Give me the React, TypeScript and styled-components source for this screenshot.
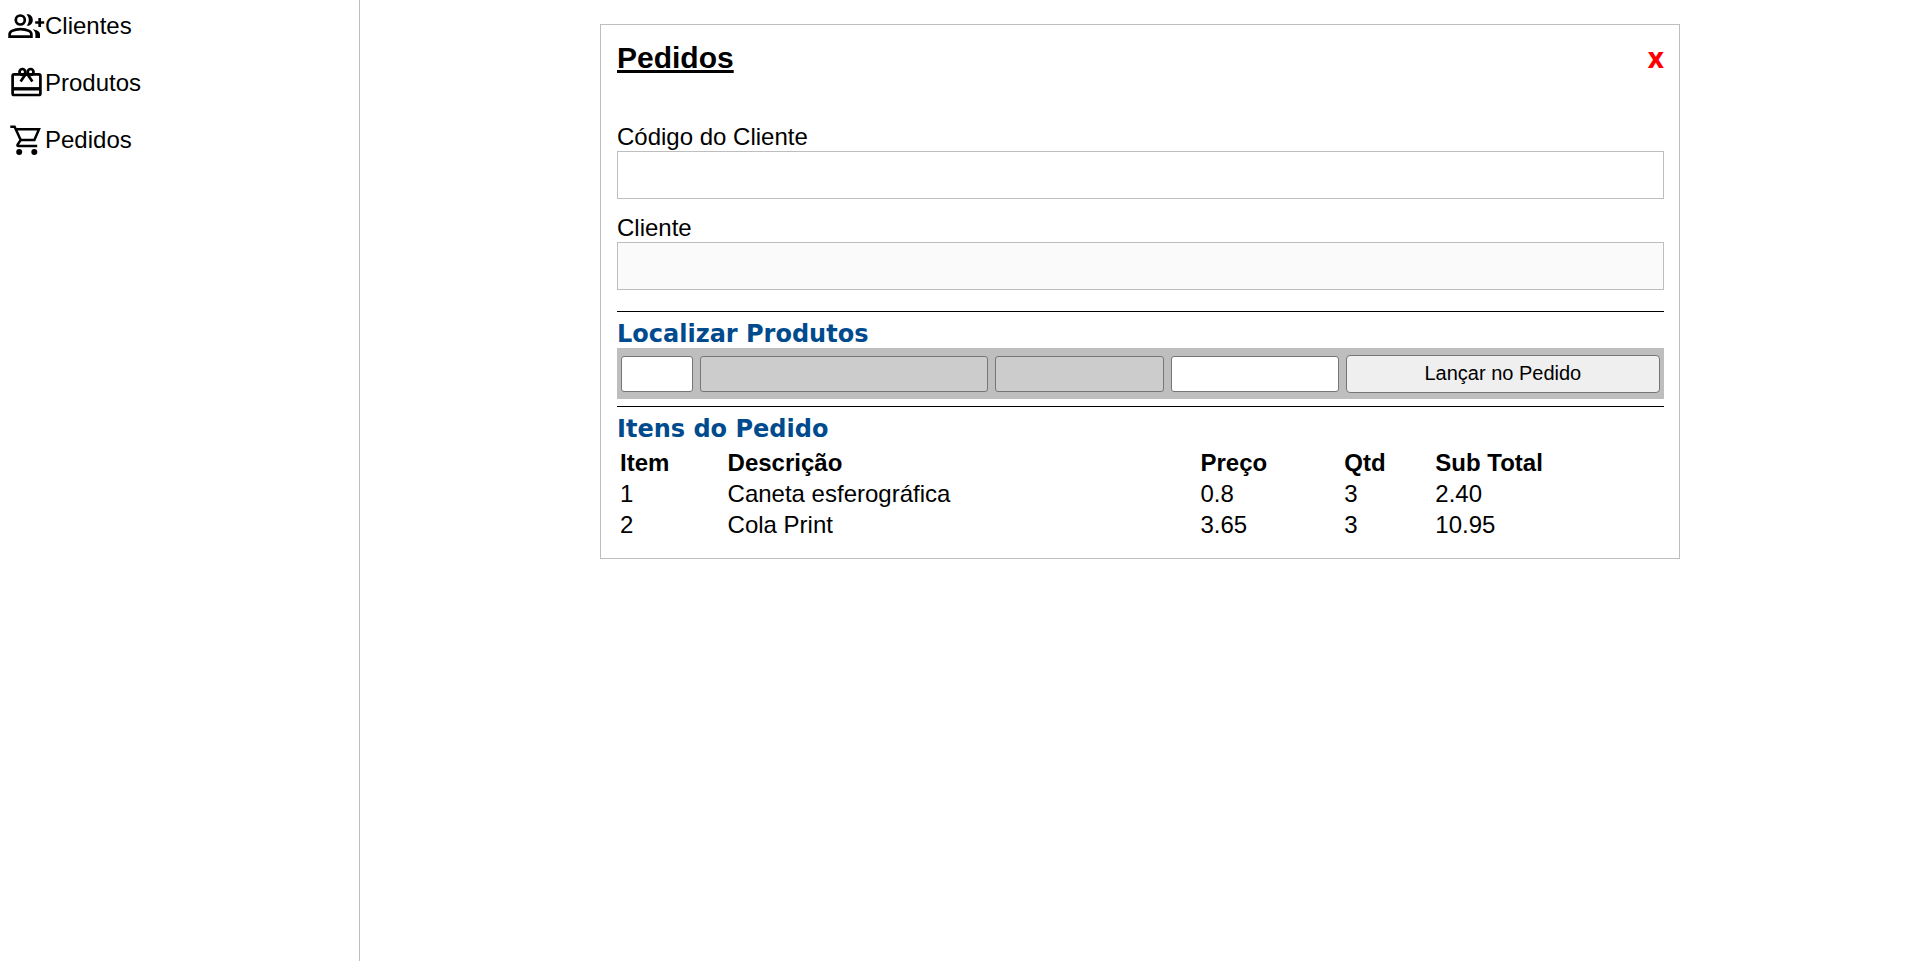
import React from "react";
import styled, { createGlobalStyle } from "styled-components";

const GlobalStyle = createGlobalStyle`
  * { box-sizing: border-box; margin: 0; padding: 0; }
  body {
    font-family: Arial, "Liberation Sans", sans-serif;
    font-size: 24px;
    line-height: 27px;
    color: #000;
    background: #fff;
  }
`;

const Page = styled.div`
  display: flex;
  align-items: stretch;
  min-height: 100vh;
`;

const Sidebar = styled.nav`
  flex: 0 0 360px;
  border-right: 1px solid #bebebe;
  padding: 8px;
`;

const MenuLink = styled.a`
  display: flex;
  align-items: center;
  height: 36px;
  margin-bottom: 21px;
  color: inherit;
  text-decoration: none;
`;

const MenuLabel = styled.span`
  padding-bottom: 2px;
`;

const MenuIcon = styled.svg`
  flex: none;
  width: 37px;
  height: 36px;
  fill: none;
  stroke: currentColor;
  stroke-width: 2.7;
`;

const Main = styled.main`
  flex: 1;
  min-width: 0;
  padding: 24px;
`;

const Card = styled.section`
  max-width: 1080px;
  margin: 0 auto;
  padding: 16px 15px 16px 16px;
  border: 1px solid #bebebe;
`;

const CardHeader = styled.header`
  display: flex;
  justify-content: space-between;
  align-items: flex-start;
  margin-bottom: 49px;
`;

const Title = styled.h1`
  font-size: 30px;
  line-height: 34px;
  text-decoration: underline;
`;

const CloseButton = styled.button`
  border: 0;
  background: none;
  color: #f00;
  font: bold 28px/32px "Open Sans", sans-serif;
  cursor: pointer;
`;

const Fields = styled.div`
  display: flex;
  flex-direction: column;
  gap: 16px;
  margin-bottom: 21px;
`;

const Field = styled.div`
  display: flex;
  flex-direction: column;
`;

const FieldLabel = styled.label`
  line-height: 25px;
  padding-bottom: 2px;
`;

const FieldInput = styled.input`
  height: 48px;
  padding: 0 8px;
  border: 1px solid #bebebe;
  font: inherit;

  &:disabled {
    background: #fafafa;
  }
`;

const Block = styled.section`
  border-top: 1px solid #000;
  padding-top: 8px;
`;

const BlockTitle = styled.h2`
  font: bold 24px/28px "DejaVu Sans", Verdana, sans-serif;
  color: #004b8d;
`;

const ProductBar = styled.form`
  display: grid;
  grid-template-columns: 72fr 288fr 168fr 168fr 314fr;
  align-items: center;
  gap: 7px;
  padding: 7px 4px 6px;
  margin-bottom: 7px;
  background: #bebebe;
`;

const ProductInput = styled.input`
  width: 100%;
  height: 36px;
  padding: 0 4px;
  border: 1px solid #767676;
  border-radius: 3px;
  background: #fff;
  font: inherit;

  &:disabled {
    background: #ccc;
  }
`;

const AddButton = styled.button`
  height: 38px;
  padding-bottom: 2px;
  border: 1px solid #767676;
  border-radius: 4px;
  background: #efefef;
  color: #000;
  font: 20px/24px Arial, "Liberation Sans", sans-serif;
  cursor: pointer;
`;

const ItemsTable = styled.table`
  width: 100%;
  margin-top: 4px;
  table-layout: fixed;
  border-collapse: separate;
  border-spacing: 2px;
  text-align: left;

  th,
  td {
    padding: 0 1px 2px;
  }
`;

const Column = styled.col<{ $width: string }>`
  width: ${(p) => p.$width};
`;

const ClientsIcon = () => (
  <MenuIcon viewBox="0 0 37 36" aria-hidden>
    <circle cx="12.3" cy="12" r="4.5" />
    <path d="M1.6 28.6V26.5C1.6 24.7 2.5 23.6 4 22.9C6.5 21.7 9.5 21.1 12.5 21.1S18.5 21.7 21 22.9C22.5 23.6 23.4 24.7 23.4 26.5V28.6Z" />
    <path
      d="M18.5 17.6C20.1 16.2 20.8 14.2 20.8 12S20.1 7.8 18.5 6.4C22 5.6 24.8 8.3 24.8 12S22 18.4 18.5 17.6ZM27.4 30V26.3C27.4 24.2 26.4 22.5 24.6 21.2C28.6 21.8 32 23.3 32 26.3V30Z"
      fill="currentColor"
      stroke="none"
    />
    <path d="M31.7 10V19M27.2 14.5H36.2" />
  </MenuIcon>
);

const ProductsIcon = () => (
  <MenuIcon viewBox="0 0 37 36" aria-hidden>
    <rect x="4.6" y="9.4" width="27.8" height="20.6" rx="1.6" />
    <path d="M4.6 23.8H32.4" strokeWidth="3.4" />
    <circle cx="14.4" cy="6.9" r="2.9" />
    <circle cx="22.6" cy="6.9" r="2.9" />
    <path d="M18.5 8L12.6 16.6M18.5 8L24.4 16.6" />
  </MenuIcon>
);

const OrdersIcon = () => (
  <MenuIcon viewBox="0 0 37 36" aria-hidden>
    <path
      d="M2.3 4.7H6.6L12.7 18H26.4L31 7.2H8M12.7 18L9.6 22.6C9.2 23.4 9.5 24 10.4 24H29.2"
      strokeWidth="2.5"
    />
    <circle cx="11.2" cy="30" r="3" fill="currentColor" stroke="none" />
    <circle cx="26.3" cy="30" r="3" fill="currentColor" stroke="none" />
  </MenuIcon>
);

const menu = [
  { label: "Clientes", Icon: ClientsIcon },
  { label: "Produtos", Icon: ProductsIcon },
  { label: "Pedidos", Icon: OrdersIcon },
];

const items = [
  { id: 1, description: "Caneta esferográfica", price: 0.8, quantity: 3 },
  { id: 2, description: "Cola Print", price: 3.65, quantity: 3 },
];

export default function App() {
  return (
    <>
      <GlobalStyle />
      <Page>
        <Sidebar>
          {menu.map(({ label, Icon }) => (
            <MenuLink key={label} href="#">
              <Icon />
              <MenuLabel>{label}</MenuLabel>
            </MenuLink>
          ))}
        </Sidebar>
        <Main>
          <Card>
            <CardHeader>
              <Title>Pedidos</Title>
              <CloseButton type="button">x</CloseButton>
            </CardHeader>
            <Fields>
              <Field>
                <FieldLabel htmlFor="codigo">Código do Cliente</FieldLabel>
                <FieldInput id="codigo" type="text" />
              </Field>
              <Field>
                <FieldLabel htmlFor="cliente">Cliente</FieldLabel>
                <FieldInput id="cliente" type="text" disabled />
              </Field>
            </Fields>
            <Block>
              <BlockTitle>Localizar Produtos</BlockTitle>
              <ProductBar onSubmit={(e) => e.preventDefault()}>
                <ProductInput aria-label="Código do produto" />
                <ProductInput aria-label="Descrição" disabled />
                <ProductInput aria-label="Preço" disabled />
                <ProductInput aria-label="Quantidade" />
                <AddButton type="submit">Lançar no Pedido</AddButton>
              </ProductBar>
            </Block>
            <Block>
              <BlockTitle>Itens do Pedido</BlockTitle>
              <ItemsTable>
                <colgroup>
                  <Column $width="10.2%" />
                  <Column $width="45.5%" />
                  <Column $width="13.7%" />
                  <Column $width="8.6%" />
                  <Column $width="22%" />
                </colgroup>
                <thead>
                  <tr>
                    <th>Item</th>
                    <th>Descrição</th>
                    <th>Preço</th>
                    <th>Qtd</th>
                    <th>Sub Total</th>
                  </tr>
                </thead>
                <tbody>
                  {items.map((item) => (
                    <tr key={item.id}>
                      <td>{item.id}</td>
                      <td>{item.description}</td>
                      <td>{item.price}</td>
                      <td>{item.quantity}</td>
                      <td>{(item.price * item.quantity).toFixed(2)}</td>
                    </tr>
                  ))}
                </tbody>
              </ItemsTable>
            </Block>
          </Card>
        </Main>
      </Page>
    </>
  );
}
